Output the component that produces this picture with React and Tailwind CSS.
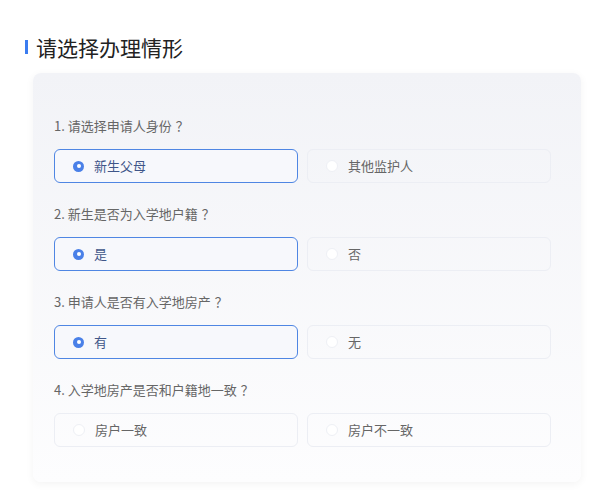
import React, { useState } from 'react';

const questions = [
  { title: '1. 请选择申请人身份', options: ['新生父母', '其他监护人'], selected: 0 },
  { title: '2. 新生是否为入学地户籍', options: ['是', '否'], selected: 0 },
  { title: '3. 申请人是否有入学地房产', options: ['有', '无'], selected: 0 },
  { title: '4. 入学地房产是否和户籍地一致', options: ['房户一致', '房户不一致'], selected: -1 },
];

const Option = ({ label, active, onClick }) => (
  <button
    onClick={onClick}
    className={`flex h-[34px] items-center rounded-[6px] border pl-[18px] text-left text-[13px] ${
      active ? 'border-[#4f86e3] bg-[#f7f8fc] text-[#3f5689]' : 'border-[#eceef4] bg-transparent text-[#666]'
    }`}
  >
    {active ? (
      <span className="mr-[10px] flex h-[11px] w-[11px] items-center justify-center rounded-full bg-[#4a80e8]">
        <span className="h-[4px] w-[4px] rounded-full bg-white" />
      </span>
    ) : (
      <span className="mr-[10px] h-[12px] w-[12px] rounded-full border border-[#eef0f5] bg-white" />
    )}
    {label}
  </button>
);

export default function App() {
  const [answers, setAnswers] = useState(questions.map((q) => q.selected));

  return (
    <div
      className="min-h-[491px] bg-white pt-[36px]"
      style={{ fontFamily: '"Noto Sans CJK SC", "Noto Sans", sans-serif' }}
    >
      <div className="flex items-center pl-[25px]">
        <span className="h-[14px] w-[3px] bg-[#3b7cf0]" />
        <h1 className="ml-[8px] text-[21px] leading-[22px] text-[#222]">请选择办理情形</h1>
      </div>

      <div className="ml-[33px] mt-[15px] w-[548px] rounded-[8px] bg-gradient-to-b from-[#f2f3f7] to-[#fdfdfe] pb-[35px] pl-[21px] pr-[30px] pt-[43px] shadow-[0_2px_8px_rgba(0,0,0,0.05)]">
        {questions.map((q, qi) => (
          <div key={qi} className={qi > 0 ? 'mt-[21px]' : ''}>
            <p className="text-[13px] leading-[20px] text-[#666]">
              {q.title}
              <span className="ml-[4px]">？</span>
            </p>
            <div className="mt-[13px] grid grid-cols-2 gap-[9px]">
              {q.options.map((opt, oi) => (
                <Option
                  key={oi}
                  label={opt}
                  active={answers[qi] === oi}
                  onClick={() => setAnswers(answers.map((a, i) => (i === qi ? oi : a)))}
                />
              ))}
            </div>
          </div>
        ))}
      </div>
    </div>
  );
}
